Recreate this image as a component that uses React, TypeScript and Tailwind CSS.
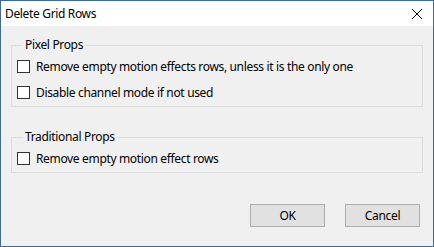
import React from "react";

function Check({ label }: { label: string }) {
  return (
    <div className="flex h-[17px] items-center">
      <span className="h-[13px] w-[13px] shrink-0 border border-[#333333] bg-white" />
      <span className="ml-[6px] whitespace-nowrap leading-[17px]">{label}</span>
    </div>
  );
}

export default function App() {
  return (
    <div
      className="flex h-[247px] w-[434px] flex-col border border-[#3f6a98] bg-[#f0f0f0] text-[12px] tracking-[-0.34px] text-black"
      style={{ fontFamily: '"Noto Sans", "Open Sans", sans-serif' }}
    >
      <div className="flex h-[25px] shrink-0 items-center justify-between bg-white pl-[4px] pr-[9px]">
        <span className="leading-[16px]">Delete Grid Rows</span>
        <svg width="12" height="12" viewBox="0 0 12 12" className="mr-[1px]">
          <path d="M1 1 L11 11 M11 1 L1 11" stroke="#000" strokeWidth="1" fill="none" />
        </svg>
      </div>
      <div className="flex flex-1 flex-col px-[10px]">
        <fieldset className="mt-[11px] border border-[#dcdcdc] pl-[5px] pt-[5px] pb-[5px]">
          <legend className="ml-[6px] px-[2px] leading-[16px]">Pixel Props</legend>
          <div className="flex flex-col gap-[9px]">
            <Check label="Remove empty motion effects rows, unless it is the only one" />
            <Check label="Disable channel mode if not used" />
          </div>
        </fieldset>
        <fieldset className="mt-[22px] border border-[#dcdcdc] pl-[5px] pt-[5px] pb-[5px]">
          <legend className="ml-[6px] px-[2px] leading-[16px]">Traditional Props</legend>
          <Check label="Remove empty motion effect rows" />
        </fieldset>
        <div className="mt-[31px] flex justify-end gap-[20px] pr-[3px]">
          <button className="h-[23px] w-[75px] border border-[#adadad] bg-[#e1e1e1] leading-[21px]">OK</button>
          <button className="h-[23px] w-[75px] border border-[#adadad] bg-[#e1e1e1] leading-[21px]">Cancel</button>
        </div>
      </div>
    </div>
  );
}
